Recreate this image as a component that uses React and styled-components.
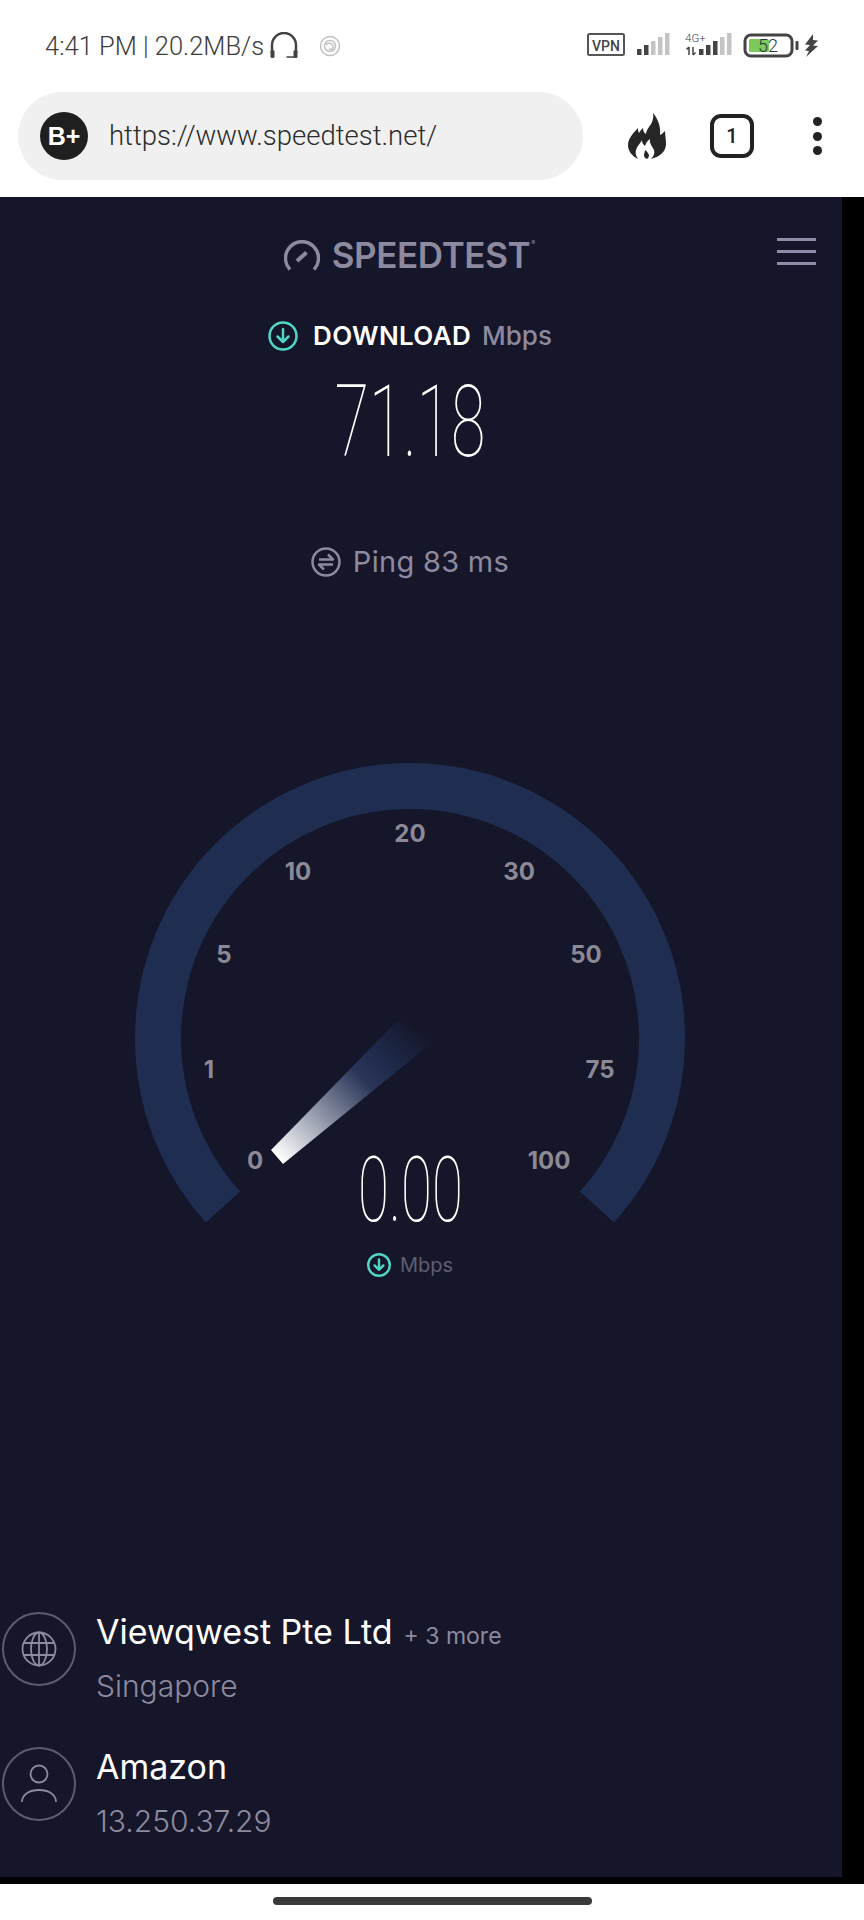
import React from "react";
import styled, { createGlobalStyle } from "styled-components";

const Global = createGlobalStyle`
  html, body { margin: 0; padding: 0; background: #fff; overflow: hidden; }
  * { box-sizing: border-box; }
`;

const UI = `Inter, "Noto Sans", sans-serif`;
const MUTED = "#8d8a9f";
const TEAL = "#4fd6c6";

const Page = styled.div`
  width: 864px; height: 1920px; display: flex; flex-direction: column; background: #fff; overflow: hidden;
`;
const StatusBar = styled.div`
  height: 92px; padding: 0 44px 0 45px; display: flex; align-items: center; justify-content: space-between;
  padding-bottom: 0; color: #444;
`;
const StatusLeft = styled.div`display: flex; align-items: center; gap: 5px;`;
const StatusText = styled.span`
  font: 300 25.5px/30px Roboto, sans-serif; color: #3c3c3c; white-space: nowrap;
`;
const StatusRight = styled.div`display: flex; align-items: center;`;
const StatusIcons = styled.svg`display: block;`;
const Browser = styled.div`
  height: 105px; padding: 0 30px 17px 18px; display: flex; align-items: center;
`;
const Pill = styled.div`
  width: 565px; height: 88px; border-radius: 44px; background: #f0f0f0; display: flex; align-items: center;
  padding-left: 22px; gap: 21px;
`;
const BrandBadge = styled.div`
  width: 48px; height: 48px; border-radius: 50%; background: #1f1f1f; color: #fff; display: flex;
  align-items: center; justify-content: center; font: 800 25px/1 "Liberation Sans", sans-serif;
`;
const UrlText = styled.span`font: 300 27.5px/36px Roboto, sans-serif; color: #2c2c2c;`;
const Tools = styled.div`
  margin-left: 45px; display: flex; align-items: center;
`;
const TabCount = styled.div`
  width: 44px; height: 44px; margin-left: 44px; border: 4px solid #222; border-radius: 11px; display: flex;
  align-items: center; justify-content: center; font: 500 20px/1 Roboto, sans-serif; color: #222;
`;
const Dots = styled.div`
  margin-left: 59px; display: flex; flex-direction: column; gap: 5.5px;
`;
const Dot = styled.span`width: 9px; height: 9px; border-radius: 50%; background: #222; display: block;`;

const Main = styled.div`height: 1687px; background: #000; padding: 0 22px 7px 0;`;
const Panel = styled.div`height: 1680px; background: #15162a; padding-right: 22px; display: flex; flex-direction: column; margin-right: 0;`;
const Header = styled.div`
  height: 124px; display: grid; grid-template-columns: 1fr auto 1fr; align-items: start;
`;
const Logo = styled.div`
  grid-column: 2; margin-top: 40px; display: flex; align-items: center; gap: 12px; margin-right: 6px; position: relative;
`;
const LogoText = styled.span`
  font: 600 35px/36px ${UI}; color: ${MUTED}; letter-spacing: -0.4px;
`;
const Reg = styled.span`
  position: absolute; right: -5px; top: 3px; font: 400 6px/1 ${UI}; color: ${MUTED};
`;
const Burger = styled.div`
  grid-column: 3; justify-self: end; margin: 41px 4px 0 0; width: 39px; display: flex; flex-direction: column; gap: 9px;
`;
const BurgerLine = styled.span`display: block; height: 3px; background: #8f8ba8;`;
const Download = styled.div`
  height: 30px; display: flex; align-items: center; justify-content: center; gap: 15px; margin-left: 0;
`;
const DownloadLabel = styled.span`font: 600 26px/30px ${UI}; color: #fff; letter-spacing: 0.35px;`;
const Unit = styled.span`font: 500 26px/30px ${UI}; color: ${MUTED}; margin-left: -4px;`;
const BigValue = styled.div`
  margin-top: ${p => p.$top}px; height: ${p => p.$h}px; text-align: center; color: #fff;
  font: 100 ${p => p.$size}px/${p => p.$h}px Roboto, sans-serif;
  transform: scaleX(${p => p.$sx});
`;
const Ping = styled.div`
  margin-top: 89px; height: 30px; display: flex; align-items: center; justify-content: center; gap: 12px;
`;
const PingText = styled.span`font: 400 29px/30px ${UI}; color: ${MUTED}; letter-spacing: 0.3px;`;
const Gauge = styled.div`margin-top: 173px; height: 530px; position: relative;`;
const GaugeArt = styled.svg`position: absolute; inset: 0; display: block;`;
const Tick = styled.span`
  position: absolute; left: ${p => p.$x}px; top: ${p => p.$y}px; transform: translate(-50%, -50%);
  font: 700 24px/28px ${UI}; color: #8c8997;
`;
const Readout = styled.div`
  position: absolute; left: 0; right: 0; top: 395px; display: flex; flex-direction: column; align-items: center;
`;
const UnitRow = styled.div`
  position: absolute; left: 0; right: 0; top: 500px; display: flex; align-items: center; justify-content: center; gap: 9px;
`;
const SmallUnit = styled.span`font: 400 20px/30px ${UI}; color: #5f5d72;`;
const Rows = styled.div`margin-top: 332px; padding-left: 2px; display: flex; flex-direction: column; gap: 41px;`;
const Row = styled.div`display: flex; gap: 20px; align-items: flex-start;`;
const RoundIcon = styled.div`
  width: 74px; height: 74px; border-radius: 50%; border: 2.5px solid #5d5b70; display: flex; align-items: center; justify-content: center; flex: none;
`;
const RowText = styled.div`display: flex; flex-direction: column; gap: 14px;`;
const Line = styled.div`display: flex; align-items: baseline; gap: 11px; height: 40px;`;
const Name = styled.span`font: 400 34px/40px ${UI}; color: #fff;`;
const More = styled.span`font: 400 23px/40px ${UI}; color: ${MUTED};`;
const Sub = styled.span`font: 300 30px/40px ${UI}; color: ${MUTED};`;
const Nav = styled.div`flex: 1; display: flex; justify-content: center; align-items: center; padding: 0 0 2px 0;`;
const HomeBar = styled.div`width: 319px; height: 8px; border-radius: 4px; background: #3a3a3a;`;

const ArrowCircle = ({ size, stroke = 2.5 }) => (
  <svg width={size} height={size} viewBox="0 0 30 30" fill="none" stroke={TEAL} strokeWidth={stroke}>
    <circle cx="15" cy="15" r="13.5" />
    <path d="M15 8v13M9.5 15.5 15 21l5.5-5.5" strokeLinecap="round" strokeLinejoin="round" />
  </svg>
);

const Bars = ({ x, dark }) => (
  <g>
    {[0, 1, 2, 3, 4].map(i => {
      const h = 6 + i * 4;
      return <rect key={i} x={x + i * 7} y={22 - h + 2} width="4.5" height={h} fill={i < dark ? "#444" : "#c4c4c4"} />;
    })}
  </g>
);

const StatusGlyphs = () => (
  <StatusIcons width="233" height="30" viewBox="0 0 233 30">
    <rect x="1" y="3" width="36" height="21" rx="1.5" fill="none" stroke="#555" strokeWidth="2" />
    <text x="19" y="19.5" textAnchor="middle" fontFamily="Roboto, sans-serif" fontWeight="500" fontSize="14" fill="#444">VPN</text>
    <Bars x={50} dark={2} />
    <text x="98" y="11" fontFamily="Roboto, sans-serif" fontWeight="300" fontSize="11.5" fill="#444">4G+</text>
    <path d="M102 16v8M99.5 18.5 102 16M106 16v8M108.500 21.5 106 24" stroke="#444" strokeWidth="1.5" fill="none" />
    <Bars x={112} dark={3} />
    <rect x="158" y="4" width="47" height="21" rx="6" fill="none" stroke="#444" strokeWidth="3" />
    <rect x="162" y="8" width="20" height="13" rx="1.5" fill="#7ccb5a" />
    <text x="181" y="21" textAnchor="middle" fontFamily="Roboto, sans-serif" fontWeight="300" fontSize="18" fill="#234">52</text>
    <rect x="208.500" y="10" width="3" height="9" rx="1" fill="#444" />
    <path d="M226 3 218 13.500 223 14 218 19.500 222 20 219 26 231 15 226 14.500 231 9.500 226 9Z" fill="#444" />
  </StatusIcons>
);

const Headset = () => (
  <svg width="30" height="28" viewBox="0 0 30 28" fill="none" stroke="#444" strokeWidth="2.500" strokeLinecap="round">
    <path d="M3 21V13a12 12 0 0 1 24 0v8" />
    <rect x="1.500" y="18" width="4" height="8" rx="1.500" fill="#444" stroke="none" />
    <rect x="24.500" y="18" width="4" height="8" rx="1.500" fill="#444" stroke="none" />
    <path d="M27 25h-9" strokeWidth="1.500" />
  </svg>
);
const Swirl = () => (
  <svg width="22" height="22" viewBox="0 0 22 22" fill="none" stroke="#c2c2c2" strokeWidth="1.500" style={{ marginLeft: 15 }}>
    <circle cx="11" cy="11" r="9.500" />
    <circle cx="11" cy="11" r="5.500" />
    <path d="M7 10c2-3 6-2 7 1s-2 4-4 3" />
  </svg>
);

const Flame = () => (
  <svg width="38" height="46" viewBox="0 0 38 46">
    <path
      fill="#262626"
      fillRule="evenodd"
      d="M25 0c1 6-1 10-4 14-2 3-3 5-3 7-2-1-3-3-3-6-2 2-3 3-4 5-1-2-1-3-1-5C5 20 0 26 0 32c0 6 4 11 10 14-2-3-3-6-2-9 1-4 4-6 6-10 0 3 1 4 3 6 1-3 2-5 5-7-1 4 2 7 4 11 1 3 0 6-3 9 8-2 15-7 15-15 0-5-1-9-1-13-2 2-3 3-5 4 1-8-2-16-7-22Z"
    />
    <path fill="#262626" d="M17 37c2 1 3 3 4 5 0 2-1 3-2 4-2-1-3-2-3-4 0-2 1-3 1-5Z" />
  </svg>
);

const SpeedIcon = () => (
  <svg width="36" height="31" viewBox="0 0 36 31" fill="none" stroke={MUTED} strokeWidth="3.500" strokeLinecap="butt">
    <path d="M6 29.500a16.500 16.500 0 1 1 24 0" />
    <path d="M13 21l9.500-8.500" strokeWidth="4" />
  </svg>
);
const PingIcon = () => (
  <svg width="30" height="30" viewBox="0 0 30 30" fill="none" stroke={MUTED} strokeWidth="2.500">
    <circle cx="15" cy="15" r="13.500" />
    <path d="M8 12.500h14l-5-5M22 17.500H8l5 5" strokeLinejoin="round" />
  </svg>
);
const Globe = () => (
  <svg width="36" height="36" viewBox="0 0 36 36" fill="none" stroke={MUTED} strokeWidth="1.800">
    <circle cx="18" cy="18" r="16.500" />
    <ellipse cx="18" cy="18" rx="8" ry="16.500" />
    <path d="M18 1.500v33M3 12h30M3 24h30" />
  </svg>
);
const Person = () => (
  <svg width="36" height="40" viewBox="0 0 36 40" fill="none" stroke={MUTED} strokeWidth="1.800">
    <circle cx="18" cy="10" r="8.500" />
    <path d="M1 38c0-8 8-12 17-12s17 4 17 12" />
  </svg>
);

const TICKS = [
  ["20", 410, 84], ["10", 298, 122], ["30", 519, 122], ["5", 224, 205], ["50", 586, 205],
  ["1", 209, 320], ["75", 600, 320], ["0", 255, 411], ["100", 549, 411],
];

export default function App() {
  return (
    <Page>
      <Global />
      <StatusBar>
        <StatusLeft>
          <StatusText>4:41 PM | 20.2MB/s</StatusText>
          <Headset />
          <Swirl />
        </StatusLeft>
        <StatusRight><StatusGlyphs /></StatusRight>
      </StatusBar>
      <Browser>
        <Pill>
          <BrandBadge>B+</BrandBadge>
          <UrlText>https://www.speedtest.net/</UrlText>
        </Pill>
        <Tools>
          <Flame />
          <TabCount>1</TabCount>
          <Dots><Dot /><Dot /><Dot /></Dots>
        </Tools>
      </Browser>
      <Main>
        <Panel>
          <Header>
            <Logo>
              <SpeedIcon />
              <LogoText>SPEEDTEST</LogoText>
              <Reg>®</Reg>
            </Logo>
            <Burger><BurgerLine /><BurgerLine /><BurgerLine /></Burger>
          </Header>
          <Download>
            <ArrowCircle size={30} />
            <DownloadLabel>DOWNLOAD</DownloadLabel>
            <Unit>Mbps</Unit>
          </Download>
          <BigValue $top={35} $h={72} $size={101} $sx={0.62}>71.18</BigValue>
          <Ping>
            <PingIcon />
            <PingText>Ping 83 ms</PingText>
          </Ping>
          <Gauge>
            <GaugeArt width="820" height="530" viewBox="0 0 820 530">
              <defs>
                <linearGradient id="needle" gradientUnits="userSpaceOnUse" x1="277" y1="407" x2="418" y2="275">
                  <stop offset="0" stopColor="#ffffff" />
                  <stop offset="0.6" stopColor="#2a3558" />
                  <stop offset="0.75" stopColor="#1e2a4b" />
                  <stop offset="1" stopColor="#15162a" />
                </linearGradient>
              </defs>
              <path d="M223 457A252 252 0 1 1 597 457" fill="none" stroke="#1f2e50" strokeWidth="46" />
              <polygon points="271,400 283,414 434,291 397,271" fill="url(#needle)" />
            </GaugeArt>
            {TICKS.map(([t, x, y]) => <Tick key={t} $x={x} $y={y}>{t}</Tick>)}
            <Readout>
              <BigValue $top={0} $h={90} $size={91} $sx={0.62}>0.00</BigValue>
            </Readout>
            <UnitRow>
              <ArrowCircle size={24} stroke={3} />
              <SmallUnit>Mbps</SmallUnit>
            </UnitRow>
          </Gauge>
          <Rows>
            <Row>
              <RoundIcon><Globe /></RoundIcon>
              <RowText>
                <Line><Name>Viewqwest Pte Ltd</Name><More>+ 3 more</More></Line>
                <Line><Sub>Singapore</Sub></Line>
              </RowText>
            </Row>
            <Row>
              <RoundIcon><Person /></RoundIcon>
              <RowText>
                <Line><Name>Amazon</Name></Line>
                <Line><Sub>13.250.37.29</Sub></Line>
              </RowText>
            </Row>
          </Rows>
        </Panel>
      </Main>
      <Nav><HomeBar /></Nav>
    </Page>
  );
}
